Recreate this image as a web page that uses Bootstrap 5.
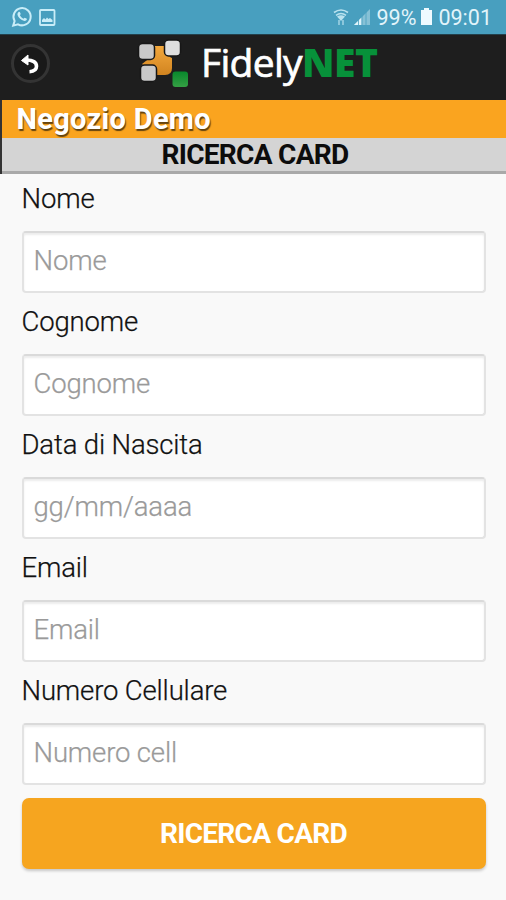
<!DOCTYPE html>
<html lang="it">
<head>
<meta charset="utf-8">
<meta name="viewport" content="width=device-width, initial-scale=1">
<title>FidelyNET - Ricerca Card</title>
<link href="https://cdn.jsdelivr.net/npm/bootstrap@5.3.0/dist/css/bootstrap.min.css" rel="stylesheet">
<style>
  body { font-family: Roboto, sans-serif; background: #f9f9f9; color: #1c1c1c; height: 900px; overflow: hidden; }
  .status-bar { height: 35px; background: #489fbf; color: #e2f4fa; font-size: 21.5px; line-height: 35px; padding: 0 14px 0 11px; border-bottom: 1px solid #23404b; }
  .app-bar { height: 65px; background: #1e1e1e; padding-left: 11px; }
  .back-btn { width: 39px; height: 39px; background: #191919; border: 3px solid #343434; margin-top: -8px; }
  .brand-mark { margin-left: 84px; margin-top: -7px; }
  .brand-name { font-family: "Open Sans", sans-serif; font-size: 39px; line-height: 56px; color: #fff; margin: -12px 0 0 13px; letter-spacing: -.7px; -webkit-text-stroke: .7px #fff; }
  .brand-name b { color: #07913a; font-weight: 800; letter-spacing: -.4px; -webkit-text-stroke: 0; }
  .titles { border-left: 2px solid #333; height: 74px; }
  .shop-title { height: 38px; background: #faa41f; color: #fff; font-size: 29px; letter-spacing: .3px; line-height: 38px; padding-left: 14.500px; text-shadow: 1px 2px 1px rgba(50,35,10,.75); }
  .page-title { height: 36px; background: #d4d4d4; color: #0c0c0c; font-size: 28px; letter-spacing: -.7px; line-height: 34px; border-bottom: 3px solid #a9a9a9; padding-left: 2px; }
  .search-form { padding: 5px 20.500px 0 21.500px; }
  .field-group { height: 122.9px; }
  .field-group .form-label { font-size: 27.5px; letter-spacing: -.15px; line-height: 40px; height: 52px; font-weight: 300; margin: 0; display: block; color: #111; -webkit-text-stroke: .25px #111; }
  .field-group .form-control { height: 62px; font-size: 27.5px; letter-spacing: -.15px; font-weight: 300; border: 2px solid #e3e3e3; border-top-color: #dadada; border-radius: 4px; padding: 0 10px 3px; box-shadow: inset 0 2px 2px #ededed; background: #fff; }
  .field-group .form-control::placeholder { color: #9a9a9a; opacity: 1; -webkit-text-stroke: .25px #9a9a9a; }
  .search-btn { height: 71px; margin-top: 5px; background: #f6a51f; color: #fff; border: 0; border-radius: 7px; font-size: 28px; letter-spacing: -.7px; box-shadow: 0 2px 3px rgba(0,0,0,.2); }
</style>
</head>
<body>
<div class="status-bar d-flex align-items-center">
  <svg width="22" height="22" viewBox="0 0 22 22" fill="none" stroke="#c9edf8" stroke-width="2"><path d="M2.2 19.6 3.6 15A8.6 8.6 0 1 1 7 18.3Z"/><path d="M7.4 6.2c.8-.7 1.4-.4 1.8.6l.5 1.3-.8 1.2c.8 1.6 1.9 2.6 3.5 3.4l1.2-1 1.8.8c.7.3.6 1-.1 1.7-1.2 1.2-3 .7-4.8-.4-2-1.200-3.500-3-4-5-.2-1 .2-2 .9-2.600Z" fill="#c9edf8" stroke="none"/></svg>
  <svg class="ms-1" width="19" height="19" viewBox="0 0 19 19"><rect x="3" y="2" width="14.500" height="15" rx=".8" fill="none" stroke="#c9edf8" stroke-width="1.800"/><path d="M5 14v-2l2-2 1.500 1.500L10 9.500l1.500 1.500L13 10l2.500 2v2Z" fill="#c9edf8"/></svg>
  <svg class="ms-auto" width="16" height="20" viewBox="0 0 16 20" fill="none" stroke="#b9e2ef" stroke-width="1.600"><path d="M1 5.500Q8 .5 15 5.500M3 8.300q5-3.500 10 0"/><path d="M4 9.500q4-2.500 8 0L8 14Z" fill="#b9e2ef" stroke="none"/><path d="M6 13v5M10 13v5" stroke-width="1.200"/></svg>
  <svg class="mx-1" width="20" height="20" viewBox="0 0 20 20"><path d="M1 18 17 2v16Z" fill="#86c1d6"/><path d="M1 18l7.500-7.500V18Z" fill="#dff3fa"/><path d="M5.500 12v6M9 9v9M13 5v13" stroke="#489fbf" stroke-width=".8"/></svg>
  <span class="pct">99%</span>
  <svg class="mx-1" width="14" height="20" viewBox="0 0 14 20"><path d="M4 1h5v2h3v15H1V3h3Z" fill="#eefaff"/></svg>
  <span class="clock">09:01</span>
</div>
<header class="app-bar d-flex align-items-center">
  <button class="back-btn rounded-circle p-0 d-flex align-items-center justify-content-center" aria-label="Indietro">
    <svg width="24" height="24" viewBox="0 0 24 24" fill="none"><path d="M2.500 8.500 9 3v10Z" fill="#fff" stroke="#fff" stroke-linejoin="round"/><path d="M7 8c6.500 0 10.500 2 10.500 6.300 0 3.200-2.500 5.200-7 5.400" stroke="#fff" stroke-width="3.600"/></svg>
  </button>
  <svg class="brand-mark" width="54" height="56" viewBox="0 0 54 56">
    <defs>
      <linearGradient id="gGold" x2="0" y2="1"><stop stop-color="#f3a83c"/><stop offset="1" stop-color="#d18420"/></linearGradient>
      <linearGradient id="gGreen" x2="0" y2="1"><stop stop-color="#08882c"/><stop offset="1" stop-color="#35a044"/></linearGradient>
    </defs>
    <path d="M17 10h18v8q0 3 3 4v10q0 7-7 7H19L8 28l9-7Z" fill="url(#gGold)"/>
    <g stroke="#171717" stroke-width="1.500"><rect x="4.500" y="7.500" width="16" height="16" rx="4" fill="#c9c9c9"/><rect x="30.500" y="4" width="16" height="16" rx="4" fill="#dedede"/><rect x="6.500" y="29" width="16" height="16.500" rx="4" fill="#c9c9c9"/></g>
    <rect x="38.500" y="35.500" width="15.500" height="15.500" rx="3" fill="url(#gGreen)"/>
  </svg>
  <div class="brand-name">Fidely<b>NET</b></div>
</header>
<div class="titles">
  <div class="shop-title fw-bold">Negozio Demo</div>
  <h1 class="page-title fw-bold text-center m-0">RICERCA CARD</h1>
</div>
<form class="search-form">
  <div class="field-group"><label class="form-label" for="nome">Nome</label><input class="form-control" id="nome" placeholder="Nome"></div>
  <div class="field-group"><label class="form-label" for="cognome">Cognome</label><input class="form-control" id="cognome" placeholder="Cognome"></div>
  <div class="field-group"><label class="form-label" for="nascita">Data di Nascita</label><input class="form-control" id="nascita" placeholder="gg/mm/aaaa"></div>
  <div class="field-group"><label class="form-label" for="email">Email</label><input class="form-control" id="email" placeholder="Email"></div>
  <div class="field-group"><label class="form-label" for="cell">Numero Cellulare</label><input class="form-control" id="cell" placeholder="Numero cell"></div>
  <button type="button" class="search-btn btn w-100 fw-bold">RICERCA CARD</button>
</form>
<script src="https://cdn.jsdelivr.net/npm/bootstrap@5.3.0/dist/js/bootstrap.bundle.min.js"></script>
</body>
</html>
